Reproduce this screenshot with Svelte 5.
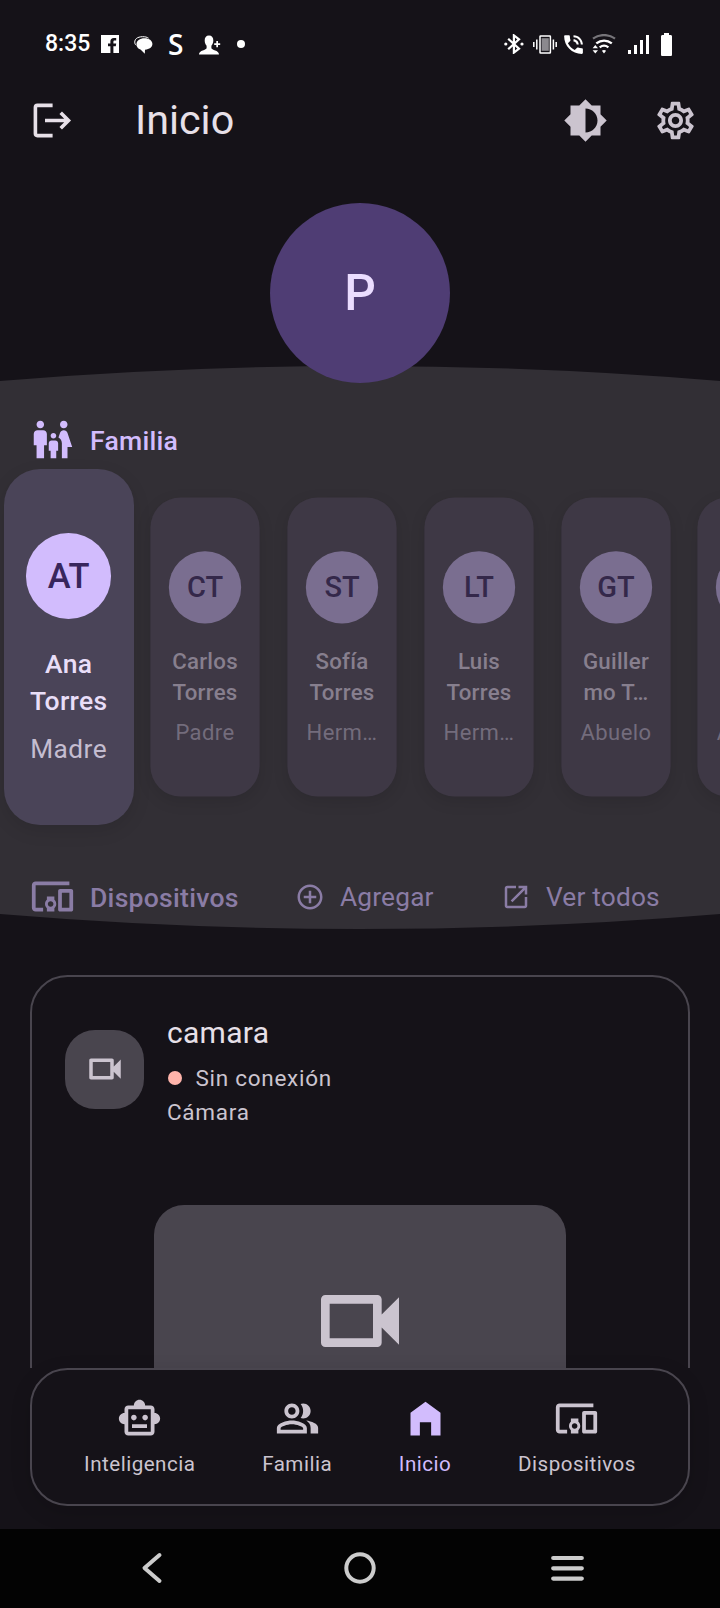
<script>
  const members = [
    { initials: 'AT', first: 'Ana', last: 'Torres', role: 'Madre', active: true },
    { initials: 'CT', first: 'Carlos', last: 'Torres', role: 'Padre' },
    { initials: 'ST', first: 'Sofía', last: 'Torres', role: 'Herm…' },
    { initials: 'LT', first: 'Luis', last: 'Torres', role: 'Herm…' },
    { initials: 'GT', first: 'Guiller', last: 'mo T…', role: 'Abuelo' },
    { initials: '', first: '', last: '', role: 'Abuela' }
  ];

  const icons = {
    brightness: 'M20 15.31L23.31 12 20 8.69V4h-4.69L12 .69 8.69 4H4v4.69L.69 12 4 15.31V20h4.69L12 23.31 15.31 20H20v-4.69zM12 18.4V5.6c3.5 0 6.4 2.9 6.4 6.4s-2.9 6.4-6.4 6.4z',
    settings: 'M19.43 12.98c.04-.32.07-.64.07-.98 0-.34-.03-.66-.07-.98l2.11-1.65c.19-.15.24-.42.12-.64l-2-3.46c-.09-.16-.26-.25-.44-.25-.06 0-.12.01-.17.03l-2.49 1c-.52-.4-1.08-.73-1.69-.98l-.38-2.65C14.46 2.18 14.25 2 14 2h-4c-.25 0-.46.18-.49.42l-.38 2.65c-.61.25-1.17.59-1.69.98l-2.49-1c-.06-.02-.12-.03-.18-.03-.17 0-.34.09-.43.25l-2 3.46c-.13.22-.07.49.12.64l2.11 1.65c-.04.32-.07.65-.07.98 0 .33.03.66.07.98l-2.11 1.65c-.19.15-.24.42-.12.64l2 3.46c.09.16.26.25.44.25.06 0 .12-.01.17-.03l2.49-1c.52.4 1.08.73 1.69.98l.38 2.65c.03.24.24.42.49.42h4c.25 0 .46-.18.49-.42l.38-2.65c.61-.25 1.17-.59 1.69-.98l2.49 1c.06.02.12.03.18.03.17 0 .34-.09.43-.25l2-3.46c.12-.22.07-.49-.12-.64l-2.11-1.65zm-1.98-1.71c.04.31.05.52.05.73 0 .21-.02.43-.05.73l-.14 1.13.89.7 1.08.84-.7 1.21-1.27-.51-1.04-.42-.9.68c-.43.32-.84.56-1.25.73l-1.06.43-.16 1.13-.2 1.35h-1.4l-.19-1.35-.16-1.13-1.06-.43c-.43-.18-.83-.41-1.23-.71l-.91-.7-1.06.43-1.27.51-.7-1.21 1.08-.84.89-.7-.14-1.13c-.03-.31-.05-.54-.05-.74s.02-.43.05-.73l.14-1.13-.89-.7-1.08-.84.7-1.21 1.27.51 1.04.42.9-.68c.43-.32.84-.56 1.25-.73l1.06-.43.16-1.13.2-1.35h1.39l.19 1.35.16 1.13 1.06.43c.43.18.83.41 1.23.71l.91.7 1.06-.43 1.27-.51.7 1.21-1.07.85-.89.7.14 1.13zM12 8c-2.21 0-4 1.79-4 4s1.79 4 4 4 4-1.79 4-4-1.79-4-4-4zm0 6c-1.1 0-2-.9-2-2s.9-2 2-2 2 .9 2 2-.9 2-2 2z',
    family: 'M16 4c0-1.11.89-2 2-2s2 .89 2 2-.89 2-2 2-2-.89-2-2zm4 18v-6h2.5l-2.54-7.63C19.68 7.55 18.92 7 18.06 7h-.12c-.86 0-1.63.55-1.9 1.37l-.86 2.58c1.08.6 1.82 1.73 1.82 3.05v8h3zm-7.5-10.5c.83 0 1.5-.67 1.5-1.5s-.67-1.5-1.5-1.5S11 9.17 11 10s.67 1.5 1.5 1.5zM5.5 6c1.11 0 2-.89 2-2s-.89-2-2-2-2 .89-2 2 .89 2 2 2zm2 16v-7H9V9c0-1.1-.9-2-2-2H4c-1.1 0-2 .9-2 2v6h1.5v7h4zm6.5 0v-4h1v-4c0-.82-.68-1.5-1.5-1.5h-2c-.82 0-1.5.68-1.5 1.5v4h1v4h3z',
    devices: 'M3 6h18V4H3c-1.1 0-2 .9-2 2v12c0 1.1.9 2 2 2h4v-2H3V6zm10 6H9v1.78c-.61.55-1 1.33-1 2.22s.39 1.67 1 2.22V20h4v-1.78c.61-.55 1-1.34 1-2.22s-.39-1.67-1-2.22V12zm-2 5.5c-.83 0-1.5-.67-1.5-1.5s.67-1.5 1.5-1.5 1.5.67 1.5 1.5-.67 1.5-1.5 1.5zM22 8h-6c-.5 0-1 .5-1 1v10c0 .5.5 1 1 1h6c.5 0 1-.5 1-1V9c0-.5-.5-1-1-1zm-1 10h-4v-8h4v8z',
    add: 'M13 7h-2v4H7v2h4v4h2v-4h4v-2h-4V7zm-1-5C6.48 2 2 6.48 2 12s4.48 10 10 10 10-4.48 10-10S17.52 2 12 2zm0 18c-4.41 0-8-3.59-8-8s3.59-8 8-8 8 3.59 8 8-3.59 8-8 8z',
    open: 'M19 19H5V5h7V3H5c-1.11 0-2 .9-2 2v14c0 1.1.89 2 2 2h14c1.1 0 2-.9 2-2v-7h-2v7zM14 3v2h3.59l-9.83 9.83 1.41 1.41L19 6.41V10h2V3h-7z',
    video: 'M15 8v8H5V8h10m1-2H4c-.55 0-1 .45-1 1v10c0 .55.45 1 1 1h12c.55 0 1-.45 1-1v-3.5l4 4v-11l-4 4V7c0-.55-.45-1-1-1z',
    robot: 'M20 9V7c0-1.1-.9-2-2-2h-3c0-1.66-1.34-3-3-3S9 3.34 9 5H6c-1.1 0-2 .9-2 2v2c-1.66 0-3 1.34-3 3s1.34 3 3 3v4c0 1.1.9 2 2 2h12c1.1 0 2-.9 2-2v-4c1.66 0 3-1.34 3-3s-1.34-3-3-3zm-2 10H6V7h12v12zm-9-6c-.83 0-1.5-.67-1.5-1.5S8.17 10 9 10s1.5.67 1.5 1.5S9.83 13 9 13zm7.5-1.5c0 .83-.67 1.5-1.5 1.5s-1.5-.67-1.5-1.5.67-1.5 1.5-1.5 1.5.67 1.5 1.5zM8 15h8v2H8v-2z',
    people: 'M16.67 13.13C18.04 14.06 19 15.32 19 17v3h4v-3c0-2.18-3.57-3.47-6.33-3.87zM15 12c2.21 0 4-1.79 4-4s-1.79-4-4-4c-.47 0-.91.1-1.33.24C14.5 5.27 15 6.58 15 8s-.5 2.73-1.33 3.76c.42.14.86.24 1.33.24zM9 12c2.21 0 4-1.79 4-4s-1.79-4-4-4-4 1.79-4 4 1.79 4 4 4zm0-6c1.1 0 2 .9 2 2s-.9 2-2 2-2-.9-2-2 .9-2 2-2zM9 13c-2.67 0-8 1.34-8 4v3h16v-3c0-2.66-5.33-4-8-4zm6 5H3v-.99C3.2 16.29 6.3 15 9 15s5.8 1.29 6 2v1z',
    home: 'M12 3.1 4 8.9V21h5v-7h6v7h5V8.9z',
    phone: 'M20 15.5c-1.25 0-2.45-.2-3.57-.57-.35-.11-.74-.03-1.02.24l-2.2 2.2c-2.83-1.44-5.15-3.75-6.59-6.59l2.2-2.21c.28-.26.36-.65.25-1C8.7 6.45 8.5 5.25 8.5 4c0-.55-.45-1-1-1H4c-.55 0-1 .45-1 1 0 9.39 7.61 17 17 17 .55 0 1-.45 1-1v-3.5c0-.55-.45-1-1-1zM19 12h2c0-4.97-4.03-9-9-9v2c3.87 0 7 3.13 7 7zm-4 0h2c0-2.76-2.24-5-5-5v2c1.66 0 3 1.34 3 3z'
  };

  const tabs = [
    { label: 'Inteligencia', icon: icons.robot },
    { label: 'Familia', icon: icons.people },
    { label: 'Inicio', icon: icons.home, active: true },
    { label: 'Dispositivos', icon: icons.devices }
  ];
</script>

{#snippet icon(path, size)}
  <svg class="icon" width={size} height={size} viewBox="0 0 24 24"><path d={path} fill="currentColor" fill-rule="evenodd" /></svg>
{/snippet}

<div class="screen">
  <div class="status">
    <div class="status-left">
      <span class="time">8:35</span>
      <svg class="fb" width="18" height="18" viewBox="0 0 18 18"><path fill="#fff" fill-rule="evenodd" d="M0 0h18v18h-5.600v-6.800h2.400l.4-2.800h-2.800V6.700c0-.9.4-1.300 1.300-1.300h1.500V2.900h-2.300c-2.300 0-3.500 1.300-3.500 3.500v2H7v2.800h2.400V18H0z" /></svg>
      <svg class="chat" width="19" height="18" viewBox="0 0 19 18"><path d="M2.200 9.300C.2 7.800.3 4.200 2.400 2.500 5 .2 12 .1 14.600 2.200" fill="none" stroke="#fff" stroke-width="1" /><path fill="#fff" d="M10.500 2.300c4.600 0 7.900 2.300 7.900 5.700 0 3.100-3 5.400-7.400 5.700l-.2 4-4.300-4.200C3.900 12.600 2.500 10.700 2.500 8.200c0-3.500 3.300-5.900 8-5.900z" /></svg>
      <span class="s">S</span>
      <svg class="person" width="22" height="20" viewBox="0 0 22 20"><path fill="#fff" d="M10 .5c2.900 0 4.400 2 4.300 5 0 2.400-.8 4-1.900 5.300v2.200c0 2.300 7.600 2 7.600 6.500H0C0 15 7.600 15.300 7.600 13v-2.200C6.500 9.500 5.700 7.900 5.700 5.500 5.600 2.500 7.100.5 10 .5zM17.300 6h1.700v2.200h2.200V10H19v2.200h-1.700V10h-2.100V8.200h2.100z" /></svg>
      <i class="dot"></i>
    </div>
    <div class="status-right">
      <svg class="bt" width="20" height="20" viewBox="0 0 20 20"><path d="M4.200 4.800 15 14.700 9.900 18.600V1.400L15 5.300 4.200 15.200" fill="none" stroke="#fff" stroke-width="2.200" /><circle cx="1.800" cy="10" r="1.600" fill="#fff" /><circle cx="18" cy="10" r="1.600" fill="#fff" /></svg>
      <svg class="vib" width="24" height="19" viewBox="0 0 24 19"><rect x="7" y="1" width="10.400" height="17" rx=".6" fill="#151218" stroke="#fff" stroke-width="1.500" /><rect x="8.600" y="3.200" width="7.200" height="12.600" fill="#8b898e" /><path d="M.8 7v5M3.800 4.500v10M20.400 4.500v10M23.200 7v5" stroke="#fff" stroke-width="1.500" /></svg>
      <span class="phone">{@render icon(icons.phone, 25)}</span>
      <svg class="wifi" width="24" height="20" viewBox="0 0 24 20"><g fill="none" stroke="#fff" stroke-width="2.300"><path d="M1 4.600C7.500-.1 16.500-.1 23 4.600" stroke="#77757a" /><path d="M4.300 9.300c4.700-3.700 10.900-3.700 15.500 0" /><path d="M7.700 13.300c2.600-2 6.100-2 8.700 0" /></g><path fill="#fff" d="M12 19.500 9.900 16.800c1.200-1 3-1 4.200 0zM3.300 11 6 14.300H.6zM3.300 19.500.6 16.200H6z" /></svg>
      <svg class="sig" width="22" height="19" viewBox="0 0 22 19"><path d="M0 15h3v4H0zM6 10h3v9H6zM12 5h3v14h-3zM18 0h3v19h-3z" fill="#fff" /></svg>
      <svg class="bat" width="11" height="23" viewBox="0 0 11 23"><path d="M3 0h5v2h1.500C10.500 2 11 2.600 11 3.500v18c0 1-.5 1.500-1.500 1.500h-8C.5 23 0 22.500 0 21.500v-18C0 2.600.5 2 1.500 2H3z" fill="#fff" /></svg>
    </div>
  </div>

  <header class="appbar">
    <svg class="logout" width="45" height="45" viewBox="0 0 45 45"><path d="M24.600 7.400H9.400Q7.400 7.400 7.400 9.400v26.200q0 2 2 2h15.200" fill="none" stroke="currentColor" stroke-width="3.600" /><path d="M17 22.500h24M32.700 14.700l7.800 7.800-7.800 7.800" fill="none" stroke="currentColor" stroke-width="3.600" /></svg>
    <h1>Inicio</h1>
    <span class="action">{@render icon(icons.brightness, 45)}</span>
    <span class="action">{@render icon(icons.settings, 45)}</span>
  </header>

  <div class="profile"><div class="avatar">P</div></div>

  <section class="band">
    <div class="heading">
      {@render icon(icons.family, 45)}
      <h2>Familia</h2>
    </div>
    <div class="members">
      {#each members as m}
        <div class="cell">
          <article class="member" class:active={m.active}>
            <div class="initials">{m.initials}</div>
            <div class="name"><span>{m.first}</span><span>{m.last}</span></div>
            <div class="role">{m.role}</div>
          </article>
        </div>
      {/each}
    </div>
    <div class="device-bar">
      <div class="heading">
        {@render icon(icons.devices, 45)}
        <h2>Dispositivos</h2>
      </div>
      <div class="link">{@render icon(icons.add, 30)}<span>Agregar</span></div>
      <div class="link">{@render icon(icons.open, 30)}<span>Ver todos</span></div>
    </div>
  </section>

  <main>
    <article class="device">
      <div class="device-head">
        <div class="tile">{@render icon(icons.video, 42)}</div>
        <div class="info">
          <h3>camara</h3>
          <p class="state"><i></i>Sin conexión</p>
          <p>Cámara</p>
        </div>
      </div>
      <div class="preview">{@render icon(icons.video, 104)}</div>
    </article>
  </main>

  <nav>
    {#each tabs as t}
      <div class="tab" class:on={t.active}>
        {@render icon(t.icon, 45)}
        <span>{t.label}</span>
      </div>
    {/each}
  </nav>

  <footer>
    <svg width="22" height="34" viewBox="0 0 22 34"><path d="M18.500 4 3.500 17l15 13" fill="none" stroke="#ccc" stroke-width="4" stroke-linecap="round" stroke-linejoin="round" /></svg>
    <svg class="ring" width="34" height="34" viewBox="0 0 34 34"><circle cx="17" cy="17" r="13.700" fill="none" stroke="#ccc" stroke-width="4" /></svg>
    <svg width="34" height="34" viewBox="0 0 34 34"><path d="M3.200 7h28.600M3.200 17.300h28.600M3.200 27.600h28.600" stroke="#ccc" stroke-width="4.200" stroke-linecap="round" /></svg>
  </footer>
</div>

<style>
  :global(body) { background: #151218; }
  .screen {
    width: 720px;
    height: 1608px;
    display: flex;
    flex-direction: column;
    overflow: hidden;
    background: #151218;
    color: #e7e0e8;
    font-family: Roboto, sans-serif;
  }
  h1, h2, h3, p { margin: 0; font-weight: 400; }
  svg { display: block; flex: none; }

  .status {
    height: 88px;
    flex: none;
    display: flex;
    justify-content: space-between;
    padding: 0 48px 0 45px;
    color: #fff;
  }
  .status-left, .status-right { display: flex; align-items: center; }
  .time { font-size: 23px; font-weight: 500; width: 56px; line-height: 88px; }
  .chat { margin-left: 15px; margin-top: 2px; }
  .s { font: 600 28px/86px "Open Sans", sans-serif; margin-left: 15px; width: 16px; }
  .person { margin-left: 15px; margin-top: 2px; }
  .dot { width: 8px; height: 8px; border-radius: 50%; background: #fff; margin-left: 16px; }
  .bt { margin-top: -1px; }
  .vib { margin-left: 9px; }
  .phone { margin: 0 5px 0 4px; }
  .wifi { margin-left: 1px; }
  .sig { margin-left: 12px; }
  .bat { margin-left: 11px; }

  .appbar {
    height: 65px;
    flex: none;
    display: flex;
    align-items: center;
    padding: 0 22.500px 0 28px;
  }
  .logout { color: #e7e0e8; }
  h1 { font-size: 41.250px; line-height: 65px; margin-left: 62px; flex: 1; }
  .action { color: #cbc4cf; margin-left: 45px; }

  .profile { height: 213px; flex: none; display: flex; justify-content: center; }
  .avatar {
    position: relative;
    z-index: 1;
    width: 180px;
    height: 180px;
    margin-top: 50px;
    border-radius: 50%;
    background: #4f3d74;
    color: #ebddff;
    font-size: 49.500px;
    font-weight: 500;
    line-height: 180px;
    text-align: center;
  }

  .band {
    height: 512px;
    flex: none;
    padding-top: 51px;
    background: #322f35;
    clip-path: path("M0 15Q360 -15 720 15V548Q360 578 0 548Z");
  }
  .heading { display: flex; align-items: center; gap: 15px; height: 45px; padding-left: 30px; color: #d2bcfd; }
  h2 { font-size: 26.600px; font-weight: 500; line-height: 45px; letter-spacing: .25px; padding-top: 2px; }
  .members {
    display: grid;
    grid-template-columns: repeat(6, 136.720px);
    height: 356px;
    margin-top: 7px;
    padding-left: .3px;
    box-sizing: border-box;
    width: 720px;
    overflow-x: clip;
  }
  .cell { display: flex; justify-content: center; }
  .member {
    width: 130px;
    height: 356px;
    box-sizing: border-box;
    padding-top: 64.300px;
    border-radius: 36px;
    background: #3e3845;
    box-shadow: 0 6px 18px rgba(0, 0, 0, .1);
    transform: scale(.84);
    display: flex;
    flex-direction: column;
    align-items: center;
    text-align: center;
  }
  .member.active { transform: none; background: #4a4458; }
  .initials {
    width: 85.300px;
    height: 85.300px;
    border-radius: 50%;
    background: #7a6e90;
    color: #34284a;
    font-size: 34.500px;
    font-weight: 500;
    line-height: 87px;
  }
  .active .initials { background: #d2bcfd; color: #38265c; }
  .name { margin-top: 26.500px; height: 74px; font-size: 26.500px; font-weight: 500; line-height: 37px; letter-spacing: .3px; color: #877f8e; }
  .name span { display: block; }
  .active .name { color: #e9def8; }
  .role { margin-top: 12px; font-size: 26.250px; line-height: 37.500px; letter-spacing: .470px; color: #736c7c; }
  .active .role { color: #c4bdd0; }

  .device-bar { display: grid; grid-template-columns: 295px 206px auto; margin-top: 49px; }
  .device-bar .heading, .link { color: #8a7ca5; }
  .link { display: flex; align-items: center; gap: 15px; font-size: 26.250px; line-height: 45px; letter-spacing: .190px; }
  .link span { padding-top: 1px; }

  main { height: 439px; flex: none; overflow: hidden; padding: 46px 30px 0; box-sizing: border-box; }
  .device {
    height: 560px;
    box-sizing: border-box;
    border: 2px solid #49454e;
    border-radius: 37.500px;
    padding: 33px 0 0 33px;
  }
  .device-head { display: flex; align-items: flex-start; gap: 23px; }
  .tile {
    width: 79px;
    height: 79px;
    margin-top: 19.500px;
    border-radius: 30px;
    background: #49454e;
    color: #cbc4cf;
    display: grid;
    place-items: center;
  }
  h3 { font-size: 30px; line-height: 45px; margin-bottom: 5.500px; letter-spacing: .280px; }
  p { font-size: 22.500px; line-height: 34px; letter-spacing: .720px; color: #cbc4cf; }
  .state { display: flex; align-items: center; gap: 13.500px; }
  .state i { width: 14px; height: 14px; border-radius: 50%; background: #ffb4ab; margin-left: 1px; }
  .preview {
    width: 412px;
    height: 240px;
    margin: 76px 0 0 89px;
    border-radius: 30px;
    background: #49454e;
    color: #cbc4cf;
    display: flex;
    justify-content: center;
    padding-top: 64px;
    box-sizing: border-box;
  }

  nav {
    height: 138px;
    flex: none;
    box-sizing: border-box;
    margin: 0 30px 23px;
    border: 2px solid #49454e;
    border-radius: 37.500px;
    box-shadow: 0 6px 20px rgba(0, 0, 0, .15);
    display: flex;
    justify-content: center;
    gap: 66.800px;
    padding-top: 26px;
  }
  .tab { display: flex; flex-direction: column; align-items: center; color: #cbc4cf; }
  .tab span { font-size: 20.600px; line-height: 30px; letter-spacing: .480px; margin-top: 8px; }
  .tab.on { color: #d2bcfd; }

  footer {
    flex: 1;
    background: #030303;
    display: flex;
    justify-content: space-between;
    align-items: center;
    padding: 0 136px 1px 141px;
  }
  .ring { margin-left: 7px; }
</style>
